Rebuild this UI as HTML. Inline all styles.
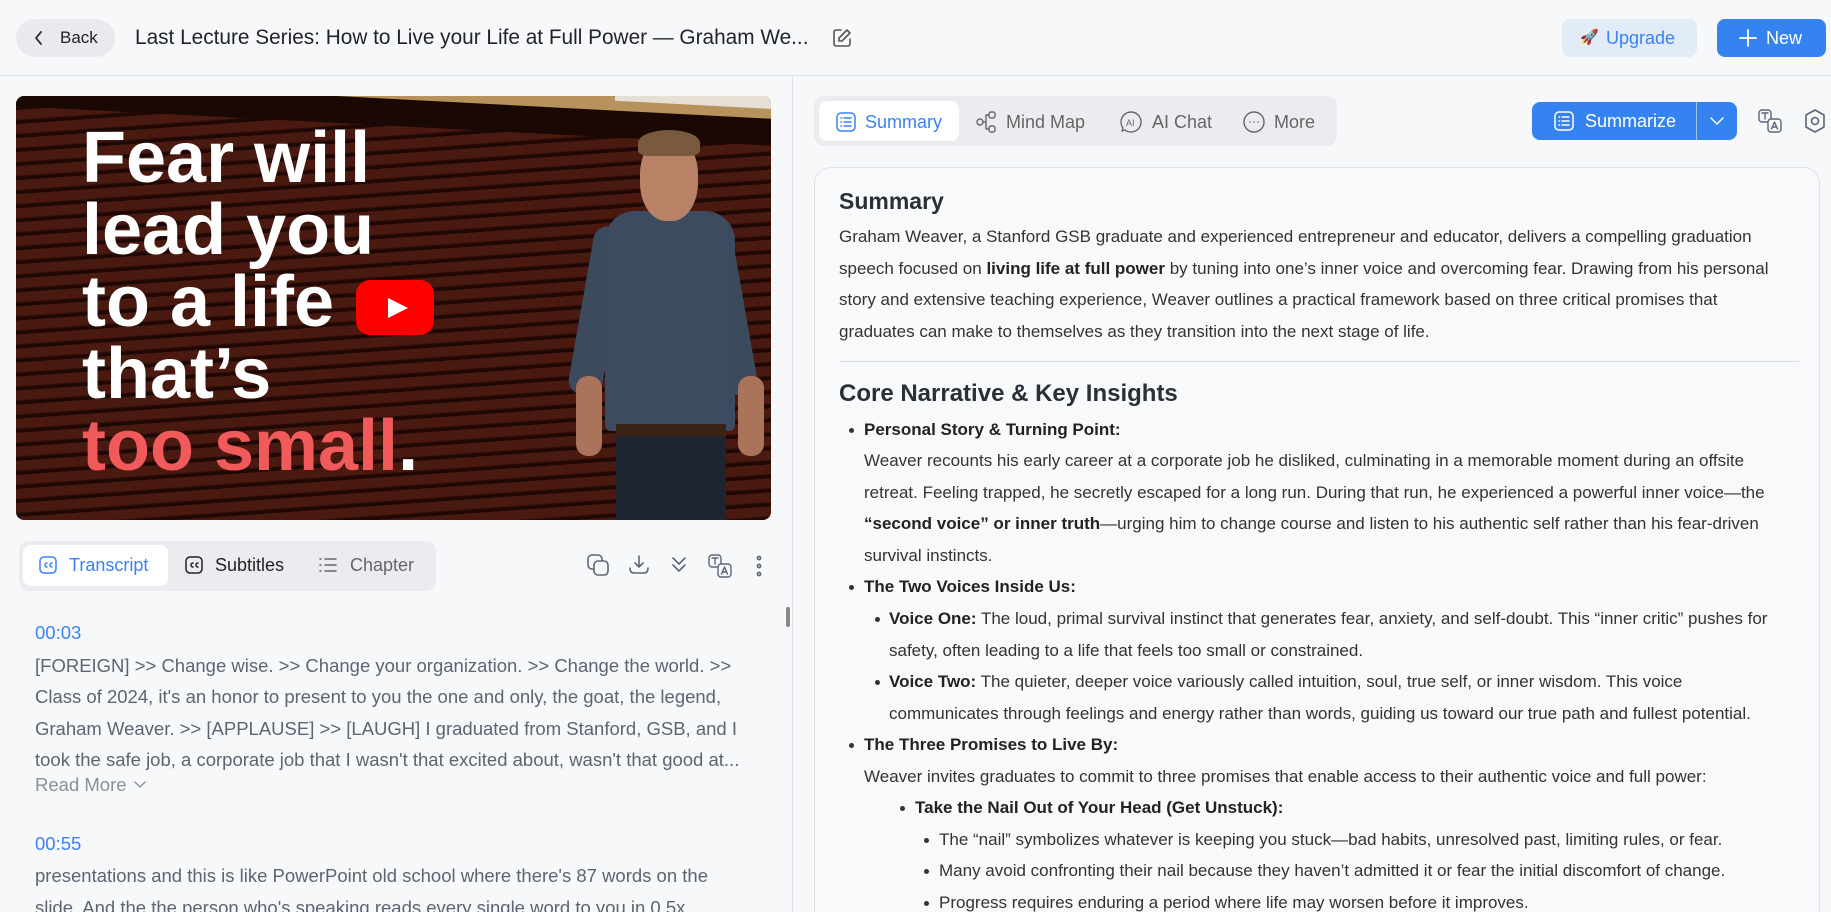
<!DOCTYPE html>
<html><head><meta charset="utf-8">
<style>
*{margin:0;padding:0;box-sizing:border-box}
html{width:1831px;height:912px;overflow:hidden}
body{width:1831px;height:912px;overflow:hidden;background:#f7f8fa;font-family:"Liberation Sans",Arial,sans-serif;position:relative;color:#333}
.a{position:absolute}
.l{position:absolute;white-space:nowrap;font-size:17px;line-height:32px;color:#333}
.t{position:absolute;white-space:nowrap;font-size:18.5px;line-height:32px;color:#5d6472}
.d{position:absolute;width:5px;height:5px;border-radius:50%;background:#333}
b{font-weight:bold;color:#222}
svg{position:absolute;fill:none;stroke-linecap:round;stroke-linejoin:round}
</style></head><body>
<!-- header -->
<div class="a" style="left:0;top:0;width:1831px;height:76px;border-bottom:1px solid #dde1e8;background:#f7f8fa"></div>
<div class="a" style="left:16px;top:19px;width:99px;height:38px;border-radius:19px;background:#e9eaed"></div>
<svg style="left:32px;top:29px" width="14" height="18" viewBox="0 0 14 18" stroke="#333" stroke-width="1.8"><path d="M9 3 L4 9 L9 15"/></svg>
<div class="a" style="left:60px;top:26px;font-size:17px;line-height:24px;color:#222">Back</div>
<div class="a" style="left:135px;top:24px;font-size:20.8px;line-height:28px;color:#1f2329;white-space:nowrap">Last Lecture Series: How to Live your Life at Full Power — Graham We...</div>
<svg style="left:831px;top:27px" width="22" height="22" viewBox="0 0 22 22" stroke="#555" stroke-width="1.6"><path d="M10 3H5a2 2 0 0 0-2 2v12a2 2 0 0 0 2 2h12a2 2 0 0 0 2-2v-5"/><path d="M16 3l3 3-8 8H8v-3z"/></svg>
<div class="a" style="left:1562px;top:19px;width:135px;height:38px;border-radius:8px;background:#e2ebf8"></div>
<div class="a" style="left:1580px;top:28px;font-size:15px">🚀</div>
<div class="a" style="left:1606px;top:26px;font-size:18px;line-height:24px;color:#3b82f6">Upgrade</div>
<div class="a" style="left:1717px;top:19px;width:109px;height:38px;border-radius:8px;background:#3583f0"></div>
<svg style="left:1738px;top:28px" width="20" height="20" viewBox="0 0 20 20" stroke="#fff" stroke-width="1.8"><path d="M10 2v16M2 10h16"/></svg>
<div class="a" style="left:1766px;top:26px;font-size:18px;line-height:24px;color:#fff">New</div>
<div class="a" style="left:792px;top:77px;width:1px;height:835px;background:#dde1e8"></div>

<!-- video -->
<div class="a" style="left:16px;top:96px;width:755px;height:424px;border-radius:8px;overflow:hidden;background:repeating-linear-gradient(176deg,#4a1a10 0px,#4a1a10 9px,#1e0806 11px,#1e0806 14px)">
  <div class="a" style="left:-20px;top:-30px;width:800px;height:60px;background:#1a0804;transform:rotate(3deg)"></div>
  <div class="a" style="left:300px;top:-40px;width:500px;height:52px;background:#b8925c;transform:rotate(3deg)"></div>
  <div class="a" style="left:600px;top:-40px;width:200px;height:50px;background:#e6e0d4;transform:rotate(3deg)"></div>
  <div class="a" style="left:66px;top:26px;font-size:72px;line-height:72px;font-weight:bold;color:#fff;letter-spacing:0px">Fear will<br>lead you<br>to a life<br>that’s<br><span style="color:#f05a5a">too small</span>.</div>
  <!-- person -->
  <div class="a" style="left:565px;top:130px;width:34px;height:170px;border-radius:14px;background:#3c4a5e;transform:rotate(10deg)"></div>
  <div class="a" style="left:695px;top:130px;width:34px;height:170px;border-radius:14px;background:#3c4a5e;transform:rotate(-10deg)"></div>
  <div class="a" style="left:589px;top:115px;width:130px;height:220px;border-radius:30px 30px 6px 6px;background:#3d4b60"></div>
  <div class="a" style="left:624px;top:40px;width:58px;height:85px;border-radius:45%;background:#b88266"></div>
  <div class="a" style="left:622px;top:34px;width:62px;height:26px;border-radius:50% 50% 20% 20%;background:#7a5a3e"></div>
  <div class="a" style="left:560px;top:280px;width:26px;height:80px;border-radius:12px;background:#a9745a"></div>
  <div class="a" style="left:722px;top:280px;width:26px;height:80px;border-radius:12px;background:#a9745a"></div>
  <div class="a" style="left:600px;top:330px;width:110px;height:100px;background:#1f2530"></div>
  <div class="a" style="left:600px;top:328px;width:110px;height:12px;background:#3a2418"></div>
  <!-- play -->
  <div class="a" style="left:340px;top:184px;width:78px;height:55px;border-radius:14px;background:#f00"></div>
  <svg style="left:370px;top:200px" width="24" height="24" viewBox="0 0 24 24"><path d="M2 2 L22 12 L2 22Z" fill="#fff" stroke="none"/></svg>
</div>

<!-- left tabs -->
<div class="a" style="left:19px;top:541px;width:417px;height:50px;border-radius:10px;background:#ebecef"></div>
<div class="a" style="left:23px;top:545px;width:145px;height:41px;border-radius:8px;background:#fff"></div>
<svg style="left:38px;top:555px" width="20" height="20" viewBox="0 0 20 20" stroke="#3b82f6" stroke-width="1.5"><rect x="2" y="2" width="16" height="16" rx="4"/><path d="M9 8a2 2 0 1 0 0 4M14 8a2 2 0 1 0 0 4"/></svg>
<div class="a" style="left:69px;top:553px;font-size:18px;line-height:24px;color:#3b82f6">Transcript</div>
<svg style="left:184px;top:555px" width="20" height="20" viewBox="0 0 20 20" stroke="#222" stroke-width="1.5"><rect x="2" y="2" width="16" height="16" rx="4"/><path d="M9 8a2 2 0 1 0 0 4M14 8a2 2 0 1 0 0 4"/></svg>
<div class="a" style="left:215px;top:553px;font-size:18px;line-height:24px;color:#222">Subtitles</div>
<svg style="left:318px;top:555px" width="20" height="20" viewBox="0 0 20 20" stroke="#666" stroke-width="1.4"><path d="M7 4h11M7 10h11M7 16h11M2 4h1M2 10h1M2 16h1"/></svg>
<div class="a" style="left:350px;top:553px;font-size:18px;line-height:24px;color:#666">Chapter</div>
<svg style="left:586px;top:553px" width="26" height="26" viewBox="0 0 26 26" stroke="#5b6678" stroke-width="1.6"><rect x="2" y="2" width="14" height="14" rx="4"/><rect x="8" y="8" width="14" height="14" rx="4" fill="#f7f8fa"/></svg>
<svg style="left:627px;top:553px" width="24" height="24" viewBox="0 0 24 24" stroke="#5b6678" stroke-width="1.6"><path d="M12 3v11M8 10l4 4 4-4M3 15c0 4 2 5 4 5h10c2 0 4-1 4-5"/></svg>
<svg style="left:668px;top:553px" width="22" height="24" viewBox="0 0 22 24" stroke="#5b6678" stroke-width="1.6"><path d="M5 5l6 6 6-6M5 12l6 6 6-6"/></svg>
<svg style="left:707px;top:553px" width="26" height="26" viewBox="0 0 26 26" stroke="#5b6678" stroke-width="1.4"><rect x="2" y="2" width="12" height="12" rx="3"/><rect x="11" y="11" width="13" height="13" rx="3" fill="#f7f8fa"/><path d="M5 5h6M8 5v6M14.5 21l3-7 3 7M15.5 19h4"/></svg>
<svg style="left:752px;top:553px" width="14" height="26" viewBox="0 0 14 26" stroke="#5b6678" stroke-width="1.6"><circle cx="7" cy="5" r="1.6"/><circle cx="7" cy="13" r="1.6"/><circle cx="7" cy="21" r="1.6"/></svg>
<div class="a" style="left:786px;top:607px;width:4px;height:20px;border-radius:2px;background:#888"></div>

<!-- transcript -->
<div class="t" style="left:35px;top:617px;color:#3b82f6">00:03</div>
<div class="t" style="left:35px;top:650px">[FOREIGN] &gt;&gt; Change wise. &gt;&gt; Change your organization. &gt;&gt; Change the world. &gt;&gt;</div>
<div class="t" style="left:35px;top:681px">Class of 2024, it's an honor to present to you the one and only, the goat, the legend,</div>
<div class="t" style="left:35px;top:713px">Graham Weaver. &gt;&gt; [APPLAUSE] &gt;&gt; [LAUGH] I graduated from Stanford, GSB, and I</div>
<div class="t" style="left:35px;top:744px">took the safe job, a corporate job that I wasn't that excited about, wasn't that good at...</div>
<div class="t" style="left:35px;top:769px;color:#8a909b">Read More</div>
<svg style="left:132px;top:777px" width="16" height="16" viewBox="0 0 16 16" stroke="#8a909b" stroke-width="1.4"><path d="M3 5l5 5 5-5"/></svg>
<div class="t" style="left:35px;top:828px;color:#3b82f6">00:55</div>
<div class="t" style="left:35px;top:860px">presentations and this is like PowerPoint old school where there's 87 words on the</div>
<div class="t" style="left:35px;top:892px">slide. And the the person who's speaking reads every single word to you in 0.5x</div>

<!-- right tabs -->
<div class="a" style="left:814px;top:96px;width:523px;height:50px;border-radius:10px;background:#ebecef"></div>
<div class="a" style="left:819px;top:101px;width:140px;height:40px;border-radius:8px;background:#fff"></div>
<svg style="left:835px;top:111px" width="22" height="22" viewBox="0 0 22 22" stroke="#3b82f6" stroke-width="1.5"><rect x="2" y="2" width="18" height="18" rx="4"/><path d="M9 7h7M9 11h7M9 15h7M6 7h0.5M6 11h0.5M6 15h0.5"/></svg>
<div class="a" style="left:865px;top:110px;font-size:18px;line-height:24px;color:#3b82f6">Summary</div>
<svg style="left:974px;top:110px" width="24" height="24" viewBox="0 0 24 24" stroke="#666" stroke-width="1.4"><circle cx="6" cy="12" r="3"/><rect x="15" y="2" width="6" height="6" rx="2"/><rect x="15" y="16" width="6" height="6" rx="2"/><path d="M9 12h3M12 5v14M12 5h3M12 19h3"/></svg>
<div class="a" style="left:1006px;top:110px;font-size:18px;line-height:24px;color:#666">Mind Map</div>
<svg style="left:1119px;top:110px" width="24" height="24" viewBox="0 0 24 24" stroke="#666" stroke-width="1.4"><path d="M12 2a10 10 0 1 1-6 18l-3 1 1-3A10 10 0 0 1 12 2z"/><text x="7" y="16" font-size="9" fill="#666" stroke="none" font-family="Liberation Sans">AI</text></svg>
<div class="a" style="left:1152px;top:110px;font-size:18px;line-height:24px;color:#666">AI Chat</div>
<svg style="left:1242px;top:110px" width="24" height="24" viewBox="0 0 24 24" stroke="#666" stroke-width="1.4"><circle cx="12" cy="12" r="10"/><path d="M8 12h.1M12 12h.1M16 12h.1"/></svg>
<div class="a" style="left:1274px;top:110px;font-size:18px;line-height:24px;color:#666">More</div>
<div class="a" style="left:1532px;top:102px;width:205px;height:38px;border-radius:8px;background:#3583f0"></div>
<div class="a" style="left:1696px;top:102px;width:1px;height:38px;background:#9cc2fa"></div>
<svg style="left:1553px;top:110px" width="22" height="22" viewBox="0 0 22 22" stroke="#fff" stroke-width="1.5"><rect x="2" y="2" width="18" height="18" rx="4"/><path d="M9 7h7M9 11h7M9 15h7M6 7h0.5M6 11h0.5M6 15h0.5"/></svg>
<div class="a" style="left:1585px;top:109px;font-size:18px;line-height:24px;color:#fff">Summarize</div>
<svg style="left:1708px;top:113px" width="18" height="16" viewBox="0 0 18 16" stroke="#fff" stroke-width="1.5"><path d="M3 5l6 6 6-6"/></svg>
<svg style="left:1757px;top:108px" width="26" height="26" viewBox="0 0 26 26" stroke="#5b6678" stroke-width="1.4"><rect x="2" y="2" width="12" height="12" rx="3"/><rect x="11" y="11" width="13" height="13" rx="3" fill="#f7f8fa"/><path d="M5 5h6M8 5v6M14.5 21l3-7 3 7M15.5 19h4"/></svg>
<svg style="left:1802px;top:108px" width="26" height="26" viewBox="0 0 26 26" stroke="#5b6678" stroke-width="1.6"><path d="M13 2l9 5v12l-9 5-9-5V7z"/><circle cx="13" cy="13" r="3.5"/></svg>

<!-- card -->
<div class="a" style="left:814px;top:167px;width:1006px;height:745px;border:1px solid #dfe3ea;border-bottom:none;border-radius:16px 16px 0 0;background:#f8f9fb"></div>
<div class="a" style="left:839px;top:186px;font-size:23px;line-height:30px;font-weight:bold;color:#2a2f38">Summary</div>
<div class="l" style="left:839px;top:221px">Graham Weaver, a Stanford GSB graduate and experienced entrepreneur and educator, delivers a compelling graduation</div>
<div class="l" style="left:839px;top:253px">speech focused on <b>living life at full power</b> by tuning into one’s inner voice and overcoming fear. Drawing from his personal</div>
<div class="l" style="left:839px;top:284px">story and extensive teaching experience, Weaver outlines a practical framework based on three critical promises that</div>
<div class="l" style="left:839px;top:316px">graduates can make to themselves as they transition into the next stage of life.</div>
<div class="a" style="left:839px;top:361px;width:960px;height:1px;background:#d6dae2"></div>
<div class="a" style="left:839px;top:379px;font-size:24px;line-height:30px;font-weight:bold;color:#2a2f38">Core Narrative &amp; Key Insights</div>

<div class="d" style="left:849px;top:428px"></div>
<div class="l" style="left:864px;top:414px"><b>Personal Story &amp; Turning Point:</b></div>
<div class="l" style="left:864px;top:445px">Weaver recounts his early career at a corporate job he disliked, culminating in a memorable moment during an offsite</div>
<div class="l" style="left:864px;top:477px">retreat. Feeling trapped, he secretly escaped for a long run. During that run, he experienced a powerful inner voice—the</div>
<div class="l" style="left:864px;top:508px"><b>“second voice” or inner truth</b>—urging him to change course and listen to his authentic self rather than his fear-driven</div>
<div class="l" style="left:864px;top:540px">survival instincts.</div>
<div class="d" style="left:849px;top:585px"></div>
<div class="l" style="left:864px;top:571px"><b>The Two Voices Inside Us:</b></div>
<div class="d" style="left:875px;top:617px"></div>
<div class="l" style="left:889px;top:603px"><b>Voice One:</b> The loud, primal survival instinct that generates fear, anxiety, and self-doubt. This “inner critic” pushes for</div>
<div class="l" style="left:889px;top:635px">safety, often leading to a life that feels too small or constrained.</div>
<div class="d" style="left:875px;top:680px"></div>
<div class="l" style="left:889px;top:666px"><b>Voice Two:</b> The quieter, deeper voice variously called intuition, soul, true self, or inner wisdom. This voice</div>
<div class="l" style="left:889px;top:698px">communicates through feelings and energy rather than words, guiding us toward our true path and fullest potential.</div>
<div class="d" style="left:849px;top:743px"></div>
<div class="l" style="left:864px;top:729px"><b>The Three Promises to Live By:</b></div>
<div class="l" style="left:864px;top:761px">Weaver invites graduates to commit to three promises that enable access to their authentic voice and full power:</div>
<div class="d" style="left:900px;top:806px"></div>
<div class="l" style="left:915px;top:792px"><b>Take the Nail Out of Your Head (Get Unstuck):</b></div>
<div class="d" style="left:924px;top:838px"></div>
<div class="l" style="left:939px;top:824px">The “nail” symbolizes whatever is keeping you stuck—bad habits, unresolved past, limiting rules, or fear.</div>
<div class="d" style="left:924px;top:869px"></div>
<div class="l" style="left:939px;top:855px">Many avoid confronting their nail because they haven’t admitted it or fear the initial discomfort of change.</div>
<div class="d" style="left:924px;top:901px"></div>
<div class="l" style="left:939px;top:887px">Progress requires enduring a period where life may worsen before it improves.</div>
</body></html>
